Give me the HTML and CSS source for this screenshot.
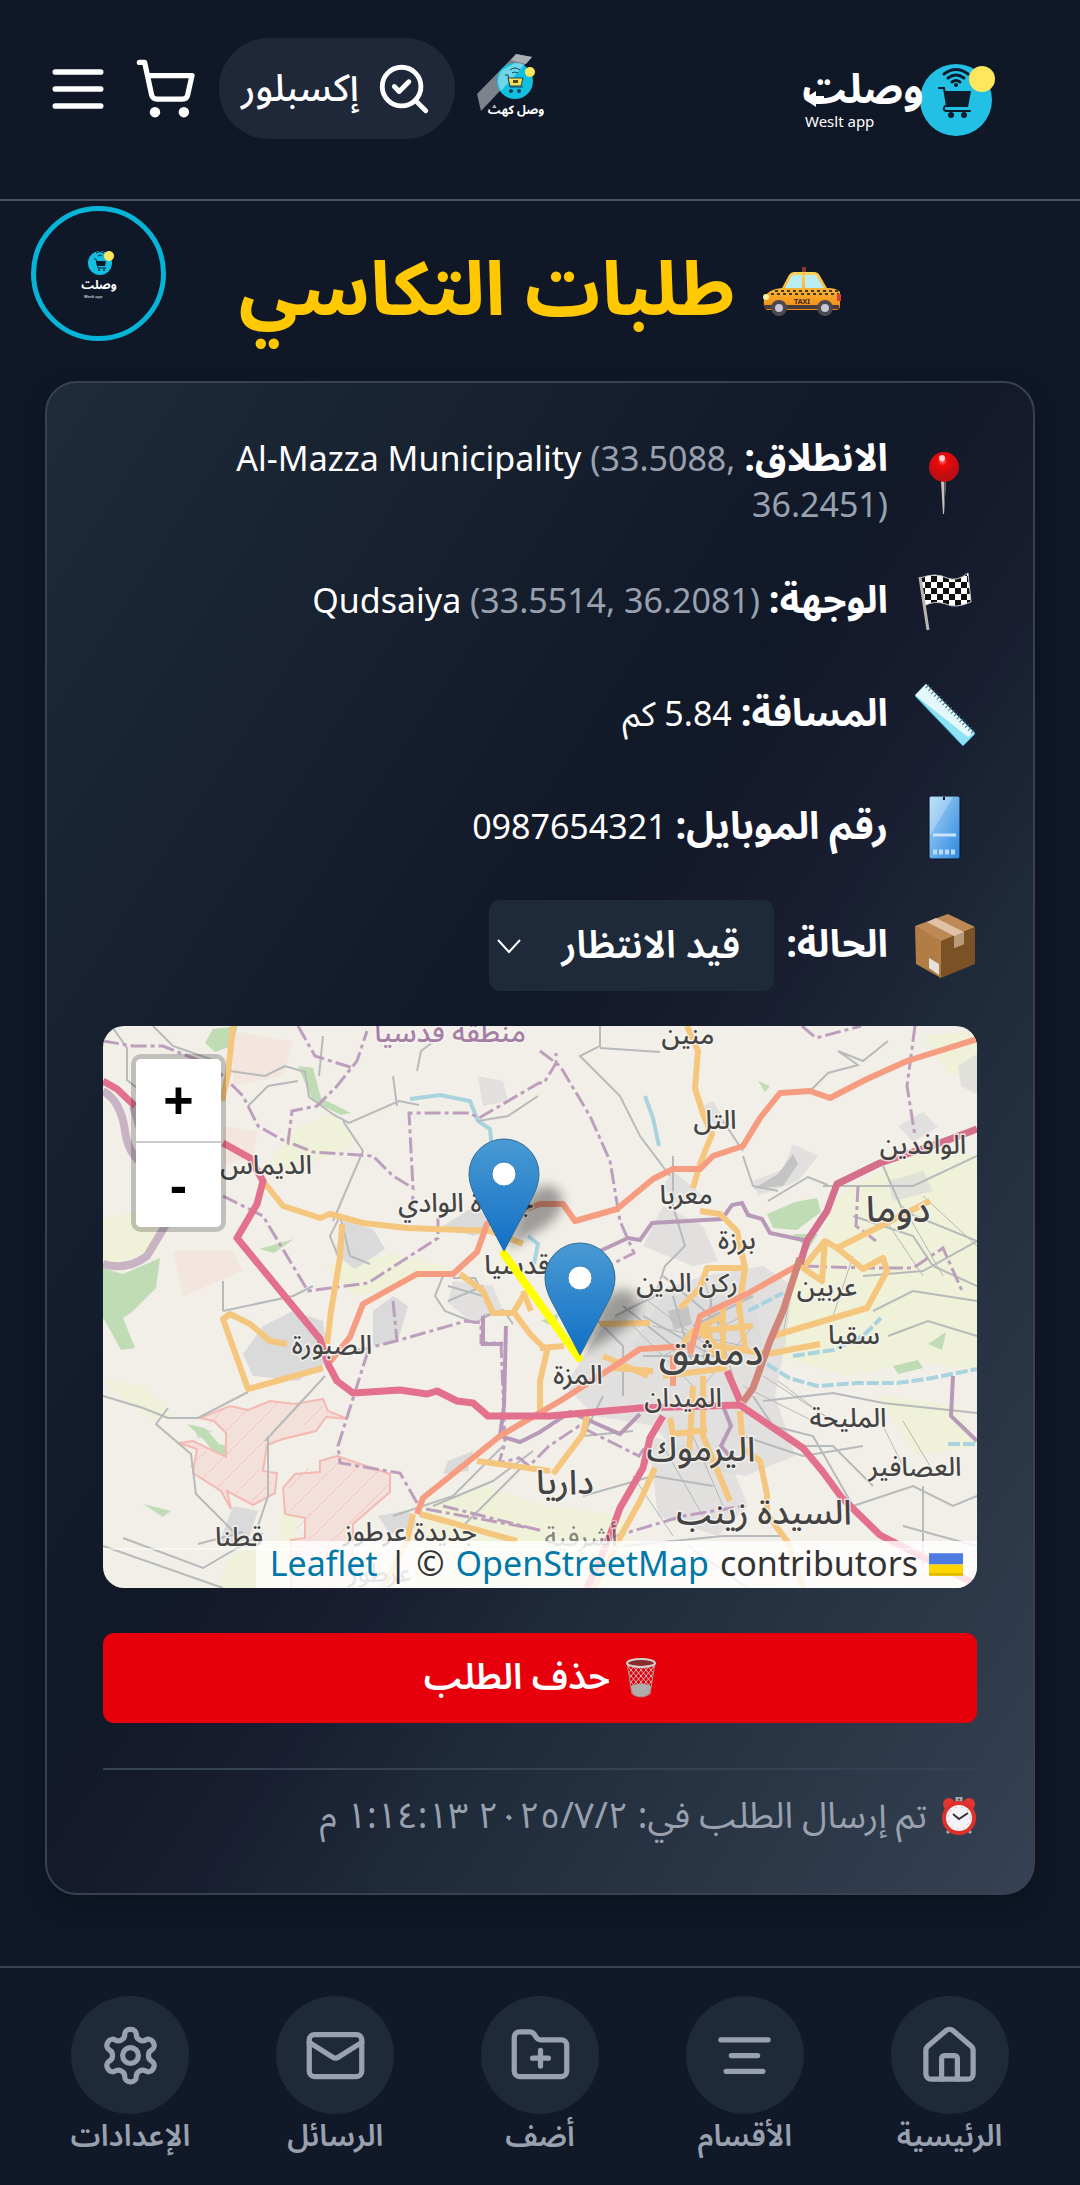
FILE: index.html
```html
<!DOCTYPE html>
<html lang="ar" dir="rtl">
<head>
    <meta charset="UTF-8">
    <meta name="viewport" content="width=device-width, initial-scale=1.0">
    <title>طلبات التكاسي</title>
    <link rel="stylesheet" href="styles.css">
</head>
<body>
    <header class="header">
        <a href="#" class="logo" aria-label="Weslt app">
            <svg viewBox="0 0 192 76" direction="ltr">
                <circle cx="152" cy="38" r="36" fill="#22c0e4"/>
                <circle cx="178" cy="17" r="13" fill="#fee75c"/>
                <g fill="none" stroke="#0d1b2a" stroke-width="3" stroke-linecap="round">
                    <path d="M140 12q12-9 24 0M144 16q8-6 16 0M148 20q4-3 8 0"/>
                    <path d="M135 26h5l3 18h20M141 44q-3 4 1 5h24" stroke-width="2"/>
                </g>
                <path d="M140 29h27l-3 16h-21z" fill="#0d1b2a"/>
                <circle cx="152" cy="23" r="2" fill="#0d1b2a"/>
                <circle cx="147" cy="53" r="3" fill="#0d1b2a"/>
                <circle cx="160" cy="53" r="3" fill="#0d1b2a"/>
                <text x="59" y="41" class="logo-ar" font-size="41">وصلت</text>
                <path d="M0 37l12-8v5h8v6h-8v5z" fill="#fff"/>
                <text x="1" y="65" class="logo-en" font-size="15">Weslt app</text>
            </svg>
        </a>
        <div class="header-actions">
            <a href="#" class="mini-logo" aria-label="وصل كهث">
                <svg viewBox="0 0 64 72" direction="ltr">
                    <path d="M0 41L39 1l16 3L4 58z" fill="#7c828c"/>
                    <path d="M39 1l16 3-6 7-15-4z" fill="#a9adb4"/>
                    <circle cx="38" cy="28" r="18" fill="#12bfe0"/>
                    <path d="M24 18L38 10q6 0 9 2L24 38q-6-10 0-20z" fill="#6fd6e9"/>
                    <circle cx="53" cy="19" r="5" fill="#fee75c"/>
                    <path d="M33 17q5-4 10 0M35 20q3-2 6 0" fill="none" stroke="#174257" stroke-width="1"/>
                    <path d="M28 22h3l2 12h13" fill="none" stroke="#174257" stroke-width="1"/>
                    <path d="M31 25h15l-2 8H33z" fill="#fadf55" stroke="#174257"/>
                    <path d="M36 27h5v3h-5z" fill="#4f4b21"/>
                    <circle cx="34" cy="38" r="2" fill="#174257"/>
                    <circle cx="42" cy="38" r="2" fill="#174257"/>
                    <text x="39" y="61" class="logo-ar" font-size="12">وصل كهث</text>
                </svg>
            </a>
            <button class="explore">
                <svg class="icon" viewBox="0 0 24 24"><path d="m8 11 2 2 4-4"/><circle cx="11" cy="11" r="8"/><path d="m21 21-4.3-4.3"/></svg>
                <span>إكسبلور</span>
            </button>
            <button class="icon-btn" aria-label="السلة">
                <svg class="icon" viewBox="0 0 24 24"><circle cx="8" cy="21" r="1"/><circle cx="19" cy="21" r="1"/><path d="M2.05 2.05h2l2.66 12.42a2 2 0 0 0 2 1.58h9.78a2 2 0 0 0 1.95-1.57l1.65-7.43H5.12"/></svg>
            </button>
            <button class="icon-btn menu-btn" aria-label="القائمة">
                <svg class="icon" viewBox="0 0 24 24"><path d="M4 6h16M4 12h16M4 18h16"/></svg>
            </button>
        </div>
    </header>

    <a href="#" class="floating" aria-label="وصلت">
        <svg viewBox="0 0 36 48" direction="ltr">
            <circle cx="19" cy="13" r="12" fill="#12bfe0"/>
            <circle cx="28" cy="6" r="5" fill="#fee75c"/>
            <path d="M13 9h2l2 9h8M15 3q4-3 8 0M17 6q2-2 4 0" fill="none" stroke="#0d1b2a"/>
            <path d="M15 11h10l-1 5h-8z" fill="#0d1b2a"/>
            <circle cx="18" cy="20" r="1" fill="#0d1b2a"/>
            <circle cx="23" cy="20" r="1" fill="#0d1b2a"/>
            <text x="18" y="39" class="logo-ar" font-size="12">وصلت</text>
            <text x="3" y="48" class="logo-en" font-size="4">Weslt app</text>
        </svg>
    </a>

    <main class="main">
        <h1 class="title">
            <svg viewBox="0 0 78 50">
                <defs>
                    <linearGradient id="cab" x2="0" y2="1"><stop offset="0" stop-color="#ffd45e"/><stop offset="1" stop-color="#f08a0c"/></linearGradient>
                </defs>
                <path d="M39 1h4v6h-4z" fill="#843a2c"/>
                <path d="M1 32q4-9 18-10l7-13q2-3 5-3h20q4 0 6 4l7 12q10 0 13 4v14q0 4-4 4H4q-4-2-3-12z" fill="url(#cab)"/>
                <path d="M22 22l6-11q1-2 3-2h8v13zM42 9h9q2 0 3 2l7 11H42z" fill="#b9ecf3"/>
                <path d="M12 25h64M8 28h68" stroke="#4a3a24" stroke-width="2" stroke-dasharray="3 3"/>
                <text x="39" y="38" text-anchor="middle" font-size="7" font-weight="700" fill="#3f2410" direction="ltr">TAXI</text>
                <path d="M0 39h76v4H2z" fill="#493a3c"/>
                <circle cx="3" cy="31" r="3" fill="#fff0a0"/>
                <path d="M74 28h4v7h-4z" fill="#df3b34"/>
                <g fill="#c9c5d0" stroke="#4b4850" stroke-width="4"><circle cx="16" cy="42" r="6"/><circle cx="62" cy="42" r="6"/></g>
            </svg>
            طلبات التكاسي
        </h1>

        <article class="card">
            <ul class="details">
                <li class="row">
                    <svg class="emoji" viewBox="0 0 64 64">
                        <defs>
                            <radialGradient id="ball" cx="0.45" cy="0.3"><stop offset="0" stop-color="#ff8a8a"/><stop offset="0.3" stop-color="#f00808"/><stop offset="1" stop-color="#c00d12"/></radialGradient>
                        </defs>
                        <path d="M28 30h5l-2 33h-1z" fill="#c7c0bd"/><path d="M31 30h2l-2 32z" fill="#5f5b5b"/>
                        <circle cx="31" cy="16" r="15" fill="url(#ball)"/>
                        <circle cx="29" cy="7" r="3" fill="#fff" opacity=".8"/>
                    </svg>
                    <p><strong>الانطلاق:</strong> <span dir="ltr">Al-Mazza Municipality <span class="coords">(33.5088, 36.2451)</span></span></p>
                </li>
                <li class="row">
                    <svg class="emoji" viewBox="0 0 64 64">
                        <defs>
                            <pattern id="check" width="12" height="12" patternUnits="userSpaceOnUse"><path d="M0 0h12v12H0z" fill="#fff"/><path d="M0 0h6v6H0zM6 6h6v6H6z" fill="#111"/></pattern>
                        </defs>
                        <path d="M7 8q16-6 27 0 10 4 21-5l3 29q-16 7-25 2-12-4-22 2z" fill="url(#check)" stroke="#c8c8c8"/>
                        <path d="M7 7l8 53" stroke="#b9b5b0" stroke-width="3"/>
                    </svg>
                    <p><strong>الوجهة:</strong> <span dir="ltr">Qudsaiya <span class="coords">(33.5514, 36.2081)</span></span></p>
                </li>
                <li class="row">
                    <svg class="emoji" viewBox="0 0 64 64">
                        <path d="M2 13L13 1l49 49-1 2-11 11z" fill="#8fe1f4" stroke="#2b91b0"/>
                        <path d="M2 12L13 1l48 49-6 4z" fill="#e4f8fc"/>
                        <path d="M14 3l47 47" stroke="#4a6570" stroke-width="5" stroke-dasharray="1 3"/>
                    </svg>
                    <p><strong>المسافة:</strong> 5.84 كم</p>
                </li>
                <li class="row">
                    <svg class="emoji" viewBox="0 0 64 64">
                        <defs>
                            <linearGradient id="screen" x2="1" y2="1"><stop offset="0" stop-color="#a9d8f6"/><stop offset="1" stop-color="#2b86e0"/></linearGradient>
                        </defs>
                        <rect x="16" y="0" width="31" height="63" rx="2" fill="url(#screen)" stroke="#0b1220"/>
                        <path d="M17 1h23L17 40z" fill="#fff" opacity=".25"/>
                        <path d="M20 39h23" stroke="#c9e5fb" stroke-width="3"/>
                        <path d="M20 56h23" stroke="#b8dcfb" stroke-width="5" stroke-dasharray="4 2"/>
                        <path d="M31 1v3" stroke="#0b1220" stroke-width="2"/>
                    </svg>
                    <p><strong>رقم الموبايل:</strong> 0987654321</p>
                </li>
                <li class="row">
                    <svg class="emoji" viewBox="0 0 64 64">
                        <path d="M2 12L35 0l27 13-34 15z" fill="#bd8954"/>
                        <path d="M2 12l26 15v37L3 50z" fill="#b27c45"/>
                        <path d="M28 27l34-14v37L28 64z" fill="#7a5226"/>
                        <path d="M14 8l9-4 28 14v12l-10 4V22z" fill="#dfc2a6"/>
                        <path d="M41 22l10-4v12l-10 4z" fill="#b99a78"/>
                        <path d="M16 44l10 6v11l-10-7z" fill="#e5e1dc"/>
                    </svg>
                    <label for="status"><strong>الحالة:</strong></label>
                    <span class="select-wrap">
                        <select id="status">
                            <option>قيد الانتظار</option>
                            <option>مقبول</option>
                            <option>مكتمل</option>
                        </select>
                        <svg class="arrow" viewBox="0 0 24 16"><path d="M1 2l11 12L23 2"/></svg>
                    </span>
                </li>
            </ul>

            <div class="map" dir="ltr">
                <svg class="tiles" viewBox="0 0 874 562" preserveAspectRatio="xMidYMid slice">
                    <defs>
                        <pattern id="hatch" width="24" height="24" patternUnits="userSpaceOnUse"><path d="M0 24L24 0" stroke="#f3c4bf" stroke-width="1"/></pattern>
                        <linearGradient id="pin" x2="0" y2="1"><stop offset="0" stop-color="#4a9bd3"/><stop offset="1" stop-color="#126fc6"/></linearGradient>
                        <filter id="soft" x="-50%" y="-50%" width="200%" height="200%"><feGaussianBlur stdDeviation="6"/></filter>
                    </defs>
                    <path d="M0 0h874v562H0z" fill="#f2efe9"/>

                    <!-- fields -->
                    <g fill="#eff1d8">
                        <path d="M735 170l50-30 50-20 39 10v215l-60-10-70 15-70-20 10-60 30-50z"/>
                        <path d="M820 10l54-5v50l-30-10zM0 192l50-8 6 40-56 18zM190 105l40-18 25 30-70 30-22-5zM222 240l70-12 60 15-100 28zM180 468l18 10-10 60-14 24h-60l14-35 50-10zM320 480l60-20 60 20 80 10 20 72H310zM0 355l40 5 30 30-20 5z"/>
                        <path d="M775 370l80 10 19 40-60 10z"/>
                    </g>
                    <g fill="#f3e6df">
                        <path d="M130 5l60 10-10 35-50 10zM120 100l35 5-5 25-30 10zM70 225h60l10 20-60 25z"/>
                    </g>
                    <!-- built-up areas -->
                    <g fill="#dadada">
                        <path d="M160 300l30-15 30 10 5 40-30 20-45-5-10-22zM240 195l30 8 12 20-30 20-20-15zM270 285l20-15 15 10-10 35-25 5zM130 480l25 5-10 30-30 5zM90 400l20 5-15 8zM340 200l40-25 10 30-20 5zM345 435l25-10-5 20-25 3zM275 490l30-6 12 16-30 8z"/>
                        <path d="M500 300l40-30 60-20 60-10 30 20-8 60-10 50 20 60-50 20-60-10-30-40-60-10-30-30z" opacity=".7"/>
                        <path d="M560 270l90 0 10 50-80 20-50-20zM545 410l80 20 20 50-30 30-60-20zM650 155l30-12 10-25 25 12-20 25-40 15zM785 155l35-10 10 20-40 10zM855 40l19-12v40l-16-8zM795 100l25-14 15 15-25 15zM610 75l12 20-8 8-16-22zM570 145l30 25-25 10-15-20zM375 50l25 5 5 20-25 5zM350 255l40 5 10 25-30 12-25-20zM560 180l40 20 15 35-25 5-50-20z" opacity=".7"/>
                    </g>
                    <g fill="#c4c4c4"><path d="M565 285l20-5 4 18-18 6zM650 163l25-15 15-20 5 10-15 22z"/></g>
                    <!-- woods and parks -->
                    <g fill="#bfdcb4">
                        <path d="M0 242l20 6 37-16-4 30-25 25-8 5 12 30-14 2-12-22-6-10zM102 17l8-14 25-3-6 20-17 6z"/>
                        <path d="M84 398l18 4 14 16 11 2v12l-14-2-10-14zM195 40l15 2 8 30 30 15-10 2-28-14zM156 223l35-10-20 14z"/>
                        <path d="M664 188l28-12 22-4 4 14-24 18-24-2zM690 208h25l-10 16zM655 55l12 5-5 6zM40 478l28 7-8 6zM438 295l18-8-4 14zM790 340l25-6 5 8-25 6zM825 318l18-12-4 18z"/>
                    </g>
                    <!-- restricted area -->
                    <path d="M97 392l30-12 18 4 22-9 25 3 28-5 5 12 20 8-22-2-10 14-33 8-16 6-4 26 14 2-2 20-22 12-26-14 4 18-10-18-28-18 4-24-18-6 14-2 33 16v-24l-12-12z" fill="#f3e0da" stroke="#f5b9b3" stroke-width="2"/>
                    <path d="M217 435l17-5 53 18v18l-37 32v70h-62v-54l14-2v-20l-20-4-2-26 12-14 25-2z" fill="#f3e0da" stroke="#f5b9b3" stroke-width="2"/>
                    <path d="M97 392l30-12 18 4 22-9 25 3 28-5 5 12-32 19-33 14-4 26 14 2-2 20-22 12-26-14-34-20 4-24 33 14v-26zM217 435l17-5 53 18v18l-37 32v70h-62v-54l12-26-20-4 10-40 25-2z" fill="url(#hatch)"/>
                    <!-- water -->
                    <g fill="none" stroke="#a9d3df" stroke-width="4">
                        <path d="M307 73l30-4 30 6 8 20 12 8 2 20M542 70l8 22 6 28M425 210l10 8-4 20"/>
                        <path d="M664 338l22 14 28 8 40-3 40 0 30-4 50-10M690 330l40-6 30-14 18-18M845 418l29 0M645 285l35-18" stroke-dasharray="12 3"/>
                    </g>
                    <!-- minor roads -->
                    <g fill="none" stroke="#b6babb" stroke-width="2">
                        <path d="M10 2l14 20 0 32 10 8M50 0l20 20 40 14M127 45l35 5 20-10 20 6 4 25 25 18 15 8 50-22 20 4M290 50l4 30M220 10l-4 40M240 95l20 30-30 70M145 80l20-20 30-5M314 45l4-20 20-15M375 95l30-5 30-20"/>
                        <path d="M497 0v20l-20 10 40 40 20 40 30 40M497 22l60 4M570 130l0 50 12 40-20 20-10 30-40 20M705 67l20-20 30-8-20-14 25 10 25-20M665 175l40-24 20 8M620 95l20 30M640 130l10 30 25 5"/>
                        <path d="M0 370l40 12 25 10 30 0 50-26M65 382l-12 16 35 30 5 40 40 40M95 518l45-12M165 410v60l-10 30M20 512l80 30 60-35M0 520l120 42M222 350l-60 65"/>
                        <path d="M720 160h90l64-30M780 140l20 45 74 30M750 190l60 20 20 30 44 20M760 250l60-5 54-30M770 285l40-20 64 10M785 310l40-15 49 15M660 375l70-8 50 10 94 10M640 410l60 20 60-10M650 370l20 30 40 10 40 70 60-20 40 20 24-10M820 460l0 80M800 500l74 20M700 420l30 0 40 40M560 380l60 0M480 470l70-20 60 10M520 520l100-10 60 0M585 520l60 42M500 370l-20 40 50-5M490 290l30 30 0 50"/>
                        <path d="M235 230l-8-20 10-20 10 40 20 8M340 250l-8 20 10 15 30 12 18-10-18-35-22 0M345 260l35 10M345 275l35-15M120 285l70-15 20-10M120 255v30M380 290l20-6 10 14M290 490l60-20 50-50M330 480l60-25 40-30M420 440l-60 60M560 250l60 50M540 290l70 40M540 330l80 0M570 270l20 70M610 260l-10 80M520 280l50 40M590 300l60-30"/>
                    </g>
                    <g fill="none" stroke="#b8b8b8" stroke-width="1">
                        <path d="M545 275l80 60M550 300l90 20M560 330l80-40M600 250l30 100M530 300l60 60M650 300l-50 60M640 360l80 40M660 350l70 45M675 355l60 45M690 250l-10 60M780 190l40 60M800 180l40 70M820 170l54 50M750 230l-20 60M560 420l40 70M590 410l30 70M530 450l40 60M780 400l20 40M800 395l30 50"/>
                    </g>
                    <!-- borders -->
                    <g fill="none" stroke="#bd9fbd" stroke-width="3" stroke-dasharray="16 4 4 4">
                        <path d="M0 15l30 5 30 0 50 20 30 30 15 30 30 17 4-32 25-5 20-20 20-25 10-30M195 0l17 30 38 12M190 118l20 8 60 4 20 20 20 12-4-75 60 0 10 5 60-35 5 0 12-20 0-10M310 170l-2 20M120 170l40 20 45 75 60-8 70-45v-20M437 25l20 15 30 50 20 45 10 60 14 32-30 15M699 0l14 12 45-12M812 0l-8 60 8 50M755 160l-2 40 20 15M700 240l60 2 50 0 30-20 20 45"/>
                        <path d="M253 325l40-10 70-20 15 2 0 20 20 0 4 100-6 20 20-5 10 8 20-20 30-20 60 30 20-30M265 325l-30 95 2 17 60 10 20 35 110 20M290 275l4 40M340 480l100 25M480 520l100-30 60-10"/>
                    </g>
                    <g fill="none" stroke="#b89ab8" stroke-width="4">
                        <path d="M497 225l28-13 12 2 12-17 70-4 10-14 10-2 6 12 14 4 8 14 38 8M403 300l-2 80-4 30 20 6 20-10 30-20 50 22 20-20M380 290v28h20M620 380l8 20-10 20 12 14M850 350l-2 40 26 25"/>
                    </g>
                    <path d="M0 65q18 10 22 40t30 40M30 80l22 70 10 50-18 30q-20 15-44 8" fill="none" stroke="#b79ab5" stroke-width="8" opacity=".7"/>

                    <!-- secondary roads -->
                    <g fill="none" stroke="#f5c67e" stroke-width="6" stroke-linejoin="round">
                        <path d="M130 0l-5 48-6 27M160 155l20 25 37 12 10-4 33 9 44 5 83 3 33 13M239 198l-2 34-9 53-4 33M184 318l-17-3-20-17-20-10-7 5 25 70 75-21M357 248l23 17 10 22 20 0 12-20M410 285l17 23 17 17-7 30 0 32M374 435l73 10M450 448l30-40 5-23M310 488l-6 27-24 47M317 488l97 27"/>
                        <path d="M584 0l11 25-3 37 8 26 9 20-12 30-7 24M597 185l20 3 17 17 8 37-38 0-7 20-20 20M642 242l-6 40 6 40M827 175l-93 47-12-7-22 27 19 13 3-40M734 222l26 21 20-11 4 13-20 37-94 28M717 318l-53 10-50-8-20-16M497 298l50-1M510 342l40 3M620 290l-30 15-15 20M650 300l-55 5M620 280l0 60M605 300l5 30M560 350l64-8M637 385l3 37 17 13 7 33 0 20 20 27 16 47M552 442l-15 33-22 40-24 47M567 392l3 16 34-4M590 360l-4 70M600 350l0 60 27 65M437 322l24-2M500 330l45 20M420 265l8 20"/>
                    </g>
                    <!-- trunk roads -->
                    <g fill="none" stroke="#f69c80" stroke-width="6" stroke-linejoin="round">
                        <path d="M874 13l-70 22-40 18-37 19-20-7-30 2-20 25-17 28-30 10-13 13h-27l-20 10-36 30-42 12-12-17h-23l-53 20-10 28-24 22h-36l-54 30-13 33-20 25M697 238l-53 30-47 22-10 38M587 320l-50 3-33 22-47 30-60 35-77 62-6 16M570 330v30"/>
                    </g>
                    <!-- motorways -->
                    <g fill="none" stroke="#e3708c" stroke-width="7" stroke-linejoin="round">
                        <path d="M0 55l14 8 18 17M120 117l27 15 13 23-6 23-20 34 60 73 23 28 8 25 9 17 16 12 47-3 27 4 10-3 20 10 16 2 15 13h62l90-8 100-3 7 5 56 38 20 24 19 26 38 37 97 50M624 345l13 30M560 390l-13 22-7 30-23 40-12 33-21 47"/>
                        <path d="M874 103l-37 14-60 20-43 21-10 27-20 30-7 23" stroke="#d4708c"/>
                        <path d="M697 232l-17 53-13 30-17 47-10 14" stroke="#d08578"/>
                    </g>

                    <!-- place names -->
                    <g class="places" text-anchor="middle">
                        <text x="347" y="16" font-size="28" class="region">منطقة قدسيا</text>
                        <text x="585" y="18">منين</text>
                        <text x="612" y="103">التل</text>
                        <text x="820" y="128">الوافدين</text>
                        <text x="163" y="148">الديماس</text>
                        <text x="363" y="186">جديدة الوادي</text>
                        <text x="583" y="178">معربا</text>
                        <text x="795" y="196" font-size="36">دوما</text>
                        <text x="634" y="223">برزة</text>
                        <text x="584" y="266">ركن الدين</text>
                        <text x="724" y="270">عربين</text>
                        <text x="414" y="248">قدسيا</text>
                        <text x="751" y="318">سقبا</text>
                        <text x="608" y="339" font-size="38">دمشق</text>
                        <text x="475" y="358">المزة</text>
                        <text x="580" y="381">الميدان</text>
                        <text x="745" y="401">المليحة</text>
                        <text x="598" y="435" font-size="34">اليرموك</text>
                        <text x="812" y="450">العصافير</text>
                        <text x="462" y="468" font-size="34">داريا</text>
                        <text x="661" y="498" font-size="34">السيدة زينب</text>
                        <text x="229" y="328">الصبورة</text>
                        <text x="136" y="520">قطنا</text>
                        <text x="307" y="515">جديدة عرطوز</text>
                        <text x="478" y="520" opacity=".6">أشرفية</text>
                        <text x="277" y="556" opacity=".6">عرطوز</text>
                    </g>
                    <path d="M0 523h874" stroke="#fff"/>

                    <!-- route and markers -->
                    <path d="M401 228l75 104" stroke="#ff0" stroke-width="8" stroke-linecap="round"/>
                    <g fill="#000" opacity=".35" filter="url(#soft)">
                        <path d="M403 224l18-50q20-24 36-8 8 18-14 34zM479 328l18-50q20-24 36-8 8 18-14 34z"/>
                    </g>
                    <g fill="url(#pin)" stroke="#2e6c97" stroke-width="1">
                        <path d="M401 225l-28-53q-7-13-7-24a35 35 0 0 1 70 0q0 11-7 24z"/>
                        <path d="M477 329l-28-53q-7-13-7-24a35 35 0 0 1 70 0q0 11-7 24z"/>
                    </g>
                    <g fill="#fff" stroke="#3a83bb" stroke-width="1"><circle cx="401" cy="148" r="12"/><circle cx="477" cy="252" r="12"/></g>
                </svg>
                <div class="zoom">
                    <button aria-label="Zoom in">+</button>
                    <button aria-label="Zoom out">-</button>
                </div>
                <div class="attribution">
                    <a href="#">Leaflet</a> | © <a href="#">OpenStreetMap</a> contributors
                    <svg viewBox="0 0 12 8"><path d="M0 0h12v4H0z" fill="#4c7be1"/><path d="M0 4h12v4H0z" fill="#ffd500"/><path d="M0 7h12v1H0z" fill="#e0bc00"/></svg>
                </div>
            </div>

            <button class="delete">
                <svg viewBox="0 0 30 40">
                    <defs>
                        <pattern id="mesh" width="5" height="6" patternUnits="userSpaceOnUse"><path d="M0 0l5 6M5 0L0 6" stroke="#c9b9b9" stroke-width="1"/></pattern>
                    </defs>
                    <path d="M1 5l5 31q9 6 18 0l5-31z" fill="url(#mesh)" stroke="#a89494"/>
                    <path d="M5 28l2 8q8 5 16 0l2-8q-10-5-20 0z" fill="#b0acac"/>
                    <ellipse cx="15" cy="5" rx="14" ry="4" fill="#8a2a2a" stroke="#d5d0d0" stroke-width="2"/>
                </svg>
                حذف الطلب
            </button>

            <footer class="sent">
                <svg viewBox="0 0 36 40">
                    <g fill="#e2352f"><circle cx="8" cy="7" r="6"/><circle cx="28" cy="7" r="6"/></g>
                    <path d="M16 0h4v5h-4zM6 36l4-4M30 36l-4-4" stroke="#a9a9ad" stroke-width="3"/>
                    <circle cx="18" cy="21" r="15" fill="#f5f3fa" stroke="#e0302a" stroke-width="4"/>
                    <path d="M12 17l6 5 9-6" fill="none" stroke="#333" stroke-width="2"/>
                    <circle cx="18" cy="21" r="11" fill="none" stroke="#999" stroke-width="1" stroke-dasharray="1 5"/>
                </svg>
                <time datetime="2025-07-02T13:14:13">تم إرسال الطلب في: ٢‏/٧‏/٢٠٢٥ ١:١٤:١٣ م</time>
            </footer>
        </article>
    </main>

    <nav class="bottom-nav">
        <a href="#">
            <span class="bubble"><svg class="icon" viewBox="0 0 24 24"><path d="M15 21v-8a1 1 0 0 0-1-1h-4a1 1 0 0 0-1 1v8"/><path d="M3 10a2 2 0 0 1 .709-1.528l7-5.999a2 2 0 0 1 2.582 0l7 5.999A2 2 0 0 1 21 10v9a2 2 0 0 1-2 2H5a2 2 0 0 1-2-2z"/></svg></span>
            الرئيسية
        </a>
        <a href="#">
            <span class="bubble"><svg class="icon" viewBox="0 0 24 24"><path d="M21 6H3M17 12H7M19 18H5"/></svg></span>
            الأقسام
        </a>
        <a href="#">
            <span class="bubble"><svg class="icon" viewBox="0 0 24 24"><path d="M12 10v6M9 13h6"/><path d="M20 20a2 2 0 0 0 2-2V8a2 2 0 0 0-2-2h-7.9a2 2 0 0 1-1.69-.9L9.6 3.9A2 2 0 0 0 7.93 3H4a2 2 0 0 0-2 2v13a2 2 0 0 0 2 2Z"/></svg></span>
            أضف
        </a>
        <a href="#">
            <span class="bubble"><svg class="icon" viewBox="0 0 24 24"><rect x="2" y="4" width="20" height="16" rx="2"/><path d="m22 7-8.97 5.7a1.94 1.94 0 0 1-2.06 0L2 7"/></svg></span>
            الرسائل
        </a>
        <a href="#">
            <span class="bubble"><svg class="icon" viewBox="0 0 24 24"><path d="M12.22 2h-.44a2 2 0 0 0-2 2v.18a2 2 0 0 1-1 1.73l-.43.25a2 2 0 0 1-2 0l-.15-.08a2 2 0 0 0-2.73.73l-.22.38a2 2 0 0 0 .73 2.73l.15.1a2 2 0 0 1 1 1.72v.51a2 2 0 0 1-1 1.74l-.15.09a2 2 0 0 0-.73 2.73l.22.38a2 2 0 0 0 2.73.73l.15-.08a2 2 0 0 1 2 0l.43.25a2 2 0 0 1 1 1.73V20a2 2 0 0 0 2 2h.44a2 2 0 0 0 2-2v-.18a2 2 0 0 1 1-1.73l.43-.25a2 2 0 0 1 2 0l.15.08a2 2 0 0 0 2.73-.73l.22-.39a2 2 0 0 0-.73-2.73l-.15-.08a2 2 0 0 1-1-1.74v-.5a2 2 0 0 1 1-1.74l.15-.09a2 2 0 0 0 .73-2.73l-.22-.38a2 2 0 0 0-2.73-.73l-.15.08a2 2 0 0 1-2 0l-.43-.25a2 2 0 0 1-1-1.73V4a2 2 0 0 0-2-2z"/><circle cx="12" cy="12" r="3"/></svg></span>
            الإعدادات
        </a>
    </nav>
</body>
</html>
```

FILE: styles.css
```css
* {
    box-sizing: border-box;
}
body {
    margin: 0;
    min-height: 100vh;
    display: flex;
    flex-direction: column;
    background: #101726;
    color: #fff;
    font-family: "Noto Sans Arabic", "Noto Sans", "DejaVu Sans", sans-serif;
    font-size: 34px;
    line-height: 46px;
}
button, select {
    font: inherit;
    color: inherit;
    border: none;
    cursor: pointer;
}
a {
    text-decoration: none;
}
svg {
    display: block;
    flex: none;
}
.icon {
    width: 63px;
    height: 63px;
    fill: none;
    stroke: currentColor;
    stroke-width: 2;
    stroke-linecap: round;
    stroke-linejoin: round;
}
.header {
    display: flex;
    justify-content: space-between;
    align-items: flex-start;
    height: 201px;
    padding: 38px 84px 0 44px;
    border-bottom: 2px solid #4a5261;
}
.logo {
    padding-top: 24px;
}
.logo svg {
    width: 192px;
    height: 76px;
    overflow: visible;
}
.logo-ar {
    fill: #fff;
    font-weight: 700;
    text-anchor: middle;
}
.logo-en {
    fill: #fff;
}
.header-actions {
    display: flex;
    align-items: center;
    gap: 22px;
    height: 101px;
}
.mini-logo svg {
    width: 64px;
    height: 72px;
    overflow: visible;
}
.explore {
    display: flex;
    align-items: center;
    gap: 16px;
    height: 101px;
    padding: 0 22px;
    border-radius: 50px;
    background: #1f2838;
    font-size: 38px;
    font-weight: 500;
}
.explore .icon {
    width: 58px;
    height: 58px;
}
.icon-btn {
    padding: 0;
    background: none;
}
.menu-btn .icon {
    width: 68px;
    height: 68px;
}
.floating {
    position: absolute;
    top: 206px;
    left: 31px;
    display: flex;
    align-items: center;
    justify-content: center;
    width: 135px;
    height: 135px;
    border: 5px solid #06b4d8;
    border-radius: 50%;
    background: #0e1828;
}
.floating svg {
    width: 36px;
    height: 48px;
    overflow: visible;
}
.main {
    flex: 1;
    padding: 0 45px 71px;
}
.title {
    display: flex;
    align-items: center;
    justify-content: center;
    gap: 28px;
    height: 180px;
    margin: 0;
    color: #ffc800;
    font-size: 75px;
    font-weight: 700;
}
.title svg {
    width: 78px;
    height: 50px;
}
.card {
    padding: 53px 56px;
    border: 2px solid #374151;
    border-radius: 32px;
    background: linear-gradient(to bottom right, #1e2b3a, #111827 45%, #181d30 56%, #1e2939 66%, #364153);
    box-shadow: 0 10px 20px #0c1320;
}
.details {
    display: flex;
    flex-direction: column;
    gap: 32px;
    margin: 0 0 35px;
    padding: 0;
    list-style: none;
}
.row {
    display: flex;
    align-items: center;
    min-height: 81px;
}
.row p {
    margin: 0;
}
.row strong {
    font-size: 38px;
}
.row label {
    margin-left: 12px;
}
.emoji {
    width: 64px;
    height: 64px;
    margin-left: 25px;
}
.coords {
    color: #99a1af;
}
.select-wrap {
    position: relative;
}
.select-wrap select {
    display: block;
    width: 285px;
    height: 91px;
    padding: 0 34px 0 66px;
    border-radius: 11px;
    background: #1e2939;
    font-size: 38px;
    font-weight: 600;
    appearance: none;
}
.arrow {
    position: absolute;
    left: 8px;
    top: 38px;
    width: 24px;
    height: 16px;
    fill: none;
    stroke: #fff;
    stroke-width: 2;
    pointer-events: none;
}
.map {
    position: relative;
    height: 562px;
    border-radius: 21px;
    overflow: hidden;
}
.tiles {
    width: 100%;
    height: 100%;
}
.places {
    fill: #444;
    stroke: #f7f5f0;
    stroke-width: 3px;
    stroke-opacity: .8;
    paint-order: stroke;
    font-size: 26px;
    font-weight: 500;
}
.places .region {
    fill: #a57ea5;
}
.zoom {
    position: absolute;
    top: 28px;
    left: 28px;
    display: flex;
    flex-direction: column;
    width: 95px;
    border: 5px solid rgba(0, 0, 0, .2);
    border-radius: 10px;
    background-clip: padding-box;
}
.zoom button {
    height: 84px;
    padding: 0;
    background: #fff;
    color: #000;
    font-size: 52px;
    font-weight: 700;
    font-family: "Liberation Sans", sans-serif;
}
.zoom button:first-child {
    border-bottom: 2px solid #ccc;
    border-radius: 5px 5px 0 0;
}
.zoom button:last-child {
    border-radius: 0 0 5px 5px;
}
.attribution {
    position: absolute;
    right: 0;
    bottom: 0;
    display: flex;
    gap: 11px;
    align-items: center;
    height: 47px;
    padding: 0 14px;
    background: rgba(255, 255, 255, .8);
    color: #333;
}
.attribution a {
    color: #0078a8;
}
.attribution svg {
    width: 34px;
    height: 23px;
}
.delete {
    display: flex;
    align-items: center;
    justify-content: center;
    gap: 16px;
    width: 100%;
    height: 90px;
    margin: 45px 0;
    border-radius: 11px;
    background: #e7000b;
    font-size: 36px;
    font-weight: 600;
}
.delete svg {
    width: 30px;
    height: 40px;
}
.sent {
    display: flex;
    align-items: center;
    gap: 14px;
    padding-top: 24px;
    border-top: 2px solid #364153;
    color: #99a1af;
    font-size: 36px;
}
.sent svg {
    width: 36px;
    height: 40px;
}
.bottom-nav {
    display: flex;
    justify-content: space-around;
    height: 219px;
    padding: 28px 28px 0;
    border-top: 2px solid #364153;
    background: #111827;
}
.bottom-nav a {
    display: flex;
    flex: 1;
    flex-direction: column;
    align-items: center;
    color: #99a1af;
    font-size: 30px;
    font-weight: 600;
}
.bubble {
    display: flex;
    align-items: center;
    justify-content: center;
    width: 118px;
    height: 118px;
    border-radius: 50%;
    background: #1e2939;
}
```
